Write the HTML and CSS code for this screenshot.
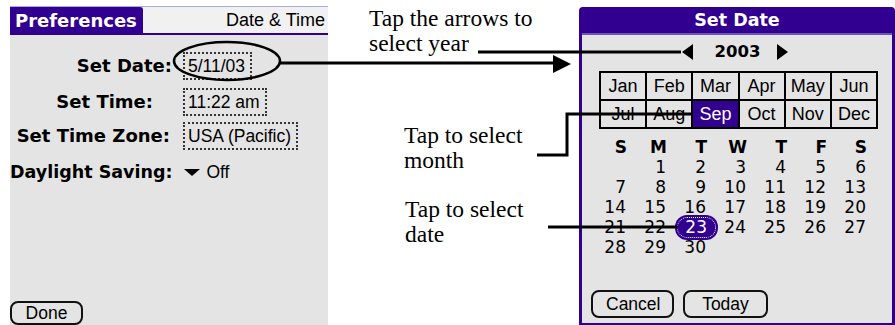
FILE: index.html
```html
<!DOCTYPE html>
<html lang="en">
  <head>
    <meta charset="UTF-8" />
    <meta name="viewport" content="width=device-width, initial-scale=1.0" />
    <title>Date &amp; Time</title>
    <link rel="stylesheet" href="styles.css">
  </head>
  <body>
    <div class="page">
      <section class="prefs">
        <div class="titlebar">
          <span class="tab">Preferences</span>
          <span class="title-right">Date &amp; Time</span>
        </div>
        <div class="form">
          <div class="row row-date">
            <span class="label">Set Date:</span>
            <span class="field">5/11/03</span>
          </div>
          <div class="row row-time">
            <span class="label label-time">Set Time:</span>
            <span class="field">11:22 am</span>
          </div>
          <div class="row row-zone">
            <span class="label label-zone">Set Time Zone:</span>
            <span class="field">USA (Pacific)</span>
          </div>
          <div class="row row-dst">
            <span class="label label-dst">Daylight Saving:</span>
            <span class="picker"><span class="down"></span>Off</span>
          </div>
        </div>
        <div class="prefs-foot">
          <button class="btn btn-done">Done</button>
        </div>
      </section>

      <div class="notes">
        <p class="note note-year">Tap the arrows to<br>select year</p>
        <p class="note note-month">Tap to select<br>month</p>
        <p class="note note-date">Tap to select<br>date</p>
      </div>

      <section class="dialog">
        <div class="dialog-title">Set Date</div>
        <div class="dialog-body">
          <div class="year">
            <span class="arrow arrow-left"></span>
            <span class="year-num">2003</span>
            <span class="arrow arrow-right"></span>
          </div>
          <div class="months">
            <span>Jan</span><span>Feb</span><span>Mar</span><span>Apr</span><span>May</span><span>Jun</span>
            <span>Jul</span><span>Aug</span><span class="on">Sep</span><span>Oct</span><span>Nov</span><span>Dec</span>
          </div>
          <div class="cal">
            <span class="wd">S</span><span class="wd">M</span><span class="wd">T</span><span class="wd">W</span><span class="wd">T</span><span class="wd">F</span><span class="wd">S</span>
            <span></span><span>1</span><span>2</span><span>3</span><span>4</span><span>5</span><span>6</span>
            <span>7</span><span>8</span><span>9</span><span>10</span><span>11</span><span>12</span><span>13</span>
            <span>14</span><span>15</span><span>16</span><span>17</span><span>18</span><span>19</span><span>20</span>
            <span>21</span><span>22</span><span><b class="today">23</b></span><span>24</span><span>25</span><span>26</span><span>27</span>
            <span>28</span><span>29</span><span>30</span>
          </div>
          <div class="dialog-foot">
            <button class="btn btn-cancel">Cancel</button>
            <button class="btn btn-today">Today</button>
          </div>
        </div>
      </section>

      <svg class="callouts" width="895" height="325" viewBox="0 0 895 325">
        <ellipse cx="227" cy="61" rx="53" ry="19" fill="none" stroke="#000" stroke-width="2.5"/>
        <line x1="280" y1="63" x2="556" y2="63" stroke="#000" stroke-width="3"/>
        <polygon points="553,55 571,64 553,73" fill="#000"/>
        <line x1="478" y1="52" x2="681" y2="52" stroke="#000" stroke-width="3"/>
        <polyline points="537,155 567,155 567,114 693,114" fill="none" stroke="#000" stroke-width="3"/>
        <line x1="548" y1="227" x2="678" y2="227" stroke="#000" stroke-width="3"/>
      </svg>
    </div>
  </body>
</html>
```

FILE: styles.css
```css
body {
  margin: 0;
  background: #fff;
  font-family: "Liberation Sans", Arial, sans-serif;
  color: #000;
}
.page {
  position: relative;
  display: flex;
  align-items: flex-start;
  width: 895px;
  height: 325px;
  overflow: hidden;
}

/* left: preferences screen */
.prefs {
  display: flex;
  flex-direction: column;
  width: 318px;
  height: 319px;
  margin: 6px 0 0 10px;
  background: #e4e4e4;
}
.titlebar {
  display: flex;
  height: 28px;
  border-top: 1px solid #a9a9ee;
}
.tab {
  width: 128px;
  padding-left: 5px;
  background: #320090;
  color: #fff;
  font: bold 18px/28px "DejaVu Sans", sans-serif;
  border-top-right-radius: 3px;
}
.title-right {
  flex: 1;
  padding-right: 3px;
  text-align: right;
  background: #f1f1f1;
  border-bottom: 2px solid #320090;
  font-size: 18px;
  line-height: 26px;
}
.form {
  margin-top: 17px;
}
.row {
  display: flex;
  align-items: center;
  height: 28px;
}
.row-time {
  margin-top: 8px;
}
.row-zone {
  margin-top: 6px;
}
.row-dst {
  margin-top: 8px;
}
.label {
  flex: none;
  width: 162px;
  margin-right: 11px;
  text-align: right;
  white-space: nowrap;
  font: bold 18px/28px "DejaVu Sans", sans-serif;
}
.label-time {
  width: 143px;
  margin-right: 30px;
}
.label-zone {
  width: 160px;
  margin-right: 13px;
}
.label-dst {
  width: auto;
  margin-right: 10px;
  font-size: 17.5px;
}
.field {
  padding: 0 5px 0 3px;
  border: 2px dotted #333;
  font-size: 17.5px;
  line-height: 24px;
}
.picker {
  display: flex;
  align-items: center;
  font-size: 17.5px;
  line-height: 28px;
}
.down {
  width: 0;
  height: 0;
  margin: 0 6px 0 2px;
  border-left: 8px solid transparent;
  border-right: 8px solid transparent;
  border-top: 7px solid #000;
}
.prefs-foot {
  margin-top: auto;
}
.btn {
  height: 24px;
  padding: 0 13px;
  border: 2px solid #111;
  border-radius: 8px;
  background: transparent;
  font-family: "Liberation Sans", Arial, sans-serif;
  font-size: 17.5px;
  color: #000;
}
.btn-done {
  display: block;
  width: 73px;
}

/* middle: annotations */
.notes {
  flex: none;
  width: 251px;
  font-family: "Liberation Serif", "Times New Roman", serif;
  font-size: 23.5px;
  line-height: 25px;
}
.note {
  margin: 0;
}
.note-year {
  margin: 6px 0 0 41px;
}
.note-month {
  margin: 67px 0 0 76px;
}
.note-date {
  margin: 24px 0 0 77px;
}

/* right: set date dialog */
.dialog {
  flex: none;
  display: flex;
  flex-direction: column;
  width: 310px;
  height: 316px;
  margin-top: 7px;
  border: 3px solid #320090;
  border-top: 0;
  border-radius: 4px 4px 0 0;
  background: #e4e4e4;
}
.dialog-title {
  height: 26px;
  background: #320090;
  border-bottom: 2px solid #6b55bd;
  color: #fff;
  text-align: center;
  font: bold 17.5px/26px "DejaVu Sans", sans-serif;
}
.dialog-body {
  flex: 1;
  display: flex;
  flex-direction: column;
  padding-bottom: 5px;
}
.year {
  display: flex;
  align-items: center;
  justify-content: center;
  height: 22px;
  margin-top: 6px;
  padding-right: 4px;
}
.arrow {
  width: 0;
  height: 0;
  border-top: 8px solid transparent;
  border-bottom: 8px solid transparent;
}
.arrow-left {
  border-right: 11px solid #000;
}
.arrow-right {
  border-left: 11px solid #000;
}
.year-num {
  margin: 0 17px 0 22px;
  font: bold 16.5px/22px "DejaVu Sans", sans-serif;
}
.months {
  display: grid;
  grid-template-columns: repeat(6, 1fr);
  grid-auto-rows: 26px;
  gap: 2px;
  width: 275px;
  margin: 8px 0 0 17px;
  border: 2px solid #000;
  background: #000;
}
.months span {
  background: #e4e4e4;
  text-align: center;
  font-size: 18px;
  line-height: 26px;
}
.months .on {
  background: #320090;
  color: #fff;
}
.cal {
  display: grid;
  grid-template-columns: repeat(7, 40px);
  grid-auto-rows: 20px;
  margin: 8px 0 0 5px;
  font: 17px/21px "DejaVu Sans", sans-serif;
}
.cal span {
  text-align: right;
  padding-right: 1px;
}
.cal .wd {
  padding-right: 0;
  margin-bottom: 3px;
  font-weight: bold;
}
.today {
  display: inline-block;
  margin-right: -10px;
  padding: 0 8px 0 7px;
  border: 1px dotted #fff;
  border-radius: 10px;
  background: #320090;
  box-shadow: 0 0 0 2px #320090;
  color: #fff;
  font-weight: normal;
  line-height: 19px;
}
.dialog-foot {
  display: flex;
  gap: 9px;
  margin-top: auto;
  padding-left: 9px;
}
.btn-cancel,
.btn-today {
  height: 28px;
}
.btn-cancel {
  width: 83px;
}
.btn-today {
  width: 85px;
}

.callouts {
  position: absolute;
  top: 0;
  left: 0;
  pointer-events: none;
}
```
